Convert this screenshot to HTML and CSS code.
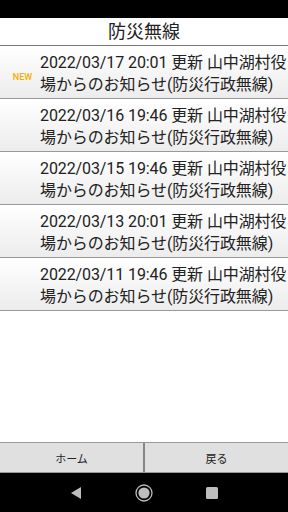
FILE: index.html
```html
<!DOCTYPE html>
<html lang="ja">
<head>
  <meta charset="UTF-8" />
  <meta name="viewport" content="width=device-width, initial-scale=1.0" />
  <title>防災無線</title>
  <link rel="stylesheet" href="styles.css">
</head>
<body>
  <div class="status-bar"></div>

  <header class="titulo">
    <h1>防災無線</h1>
  </header>

  <main class="lista">
    <a class="fila" href="#">
      <span class="nuevo">NEW</span>
      <span class="texto">2022/03/17 20:01 更新 山中湖村役場からのお知らせ(防災行政無線)</span>
    </a>
    <a class="fila" href="#">
      <span class="nuevo"></span>
      <span class="texto">2022/03/16 19:46 更新 山中湖村役場からのお知らせ(防災行政無線)</span>
    </a>
    <a class="fila" href="#">
      <span class="nuevo"></span>
      <span class="texto">2022/03/15 19:46 更新 山中湖村役場からのお知らせ(防災行政無線)</span>
    </a>
    <a class="fila" href="#">
      <span class="nuevo"></span>
      <span class="texto">2022/03/13 20:01 更新 山中湖村役場からのお知らせ(防災行政無線)</span>
    </a>
    <a class="fila" href="#">
      <span class="nuevo"></span>
      <span class="texto">2022/03/11 19:46 更新 山中湖村役場からのお知らせ(防災行政無線)</span>
    </a>
  </main>

  <footer class="botones">
    <button>ホーム</button>
    <button>戻る</button>
  </footer>

  <nav class="nav-bar">
    <svg width="14" height="14" viewBox="0 0 14 14"><polygon points="12,1 12,13 2,7" fill="#bdbdbd"/></svg>
    <svg width="18" height="18" viewBox="0 0 18 18"><circle cx="9" cy="9" r="8" fill="none" stroke="#bdbdbd" stroke-width="1.3"/><circle cx="9" cy="9" r="5.6" fill="#bdbdbd"/></svg>
    <svg width="14" height="14" viewBox="0 0 14 14"><rect x="1" y="1" width="12" height="12" rx="1.5" fill="#bdbdbd"/></svg>
  </nav>
</body>
</html>
```

FILE: styles.css
```css
* {
  margin: 0;
  padding: 0;
  box-sizing: border-box;
  font-family: Roboto, 'Noto Sans CJK JP', sans-serif;
}

body {
  width: 288px;
  height: 512px;
  background: #fff;
  color: #222;
  display: flex;
  flex-direction: column;
  overflow: hidden;
}

.status-bar {
  height: 18px;
  background: #000;
}

.titulo {
  height: 28px;
  border-bottom: 1px solid #777;
  display: flex;
  align-items: center;
  justify-content: center;
}

.titulo h1 {
  font-size: 18px;
  font-weight: normal;
  color: #222;
  line-height: 1;
}

.lista {
  flex: 1;
}

.fila {
  display: flex;
  align-items: center;
  height: 53px;
  padding-top: 2px;
  text-decoration: none;
  color: #222;
  background: linear-gradient(#fff, #ececec);
  border-top: 1px solid #fff;
  border-bottom: 1px solid #999;
}

.nuevo {
  width: 40px;
  flex-shrink: 0;
  text-align: center;
  font-size: 9px;
  font-weight: 500;
  color: #f5ad00;
  padding-top: 6px;
  padding-left: 5px;
}

.texto {
  font-size: 16px;
  line-height: 22px;
  letter-spacing: -0.1px;
}

.botones {
  display: flex;
  height: 31px;
  border-top: 1px solid #999;
  border-bottom: 1px solid #999;
  background: #e0e0e0;
}

.botones button {
  flex: 1;
  border: none;
  background: #e0e0e0;
  font-size: 11px;
  color: #222;
}

.botones button + button {
  border-left: 2px solid #888;
}

.nav-bar {
  height: 39px;
  background: #000;
  display: flex;
  align-items: center;
  justify-content: center;
  gap: 52px;
}
```
